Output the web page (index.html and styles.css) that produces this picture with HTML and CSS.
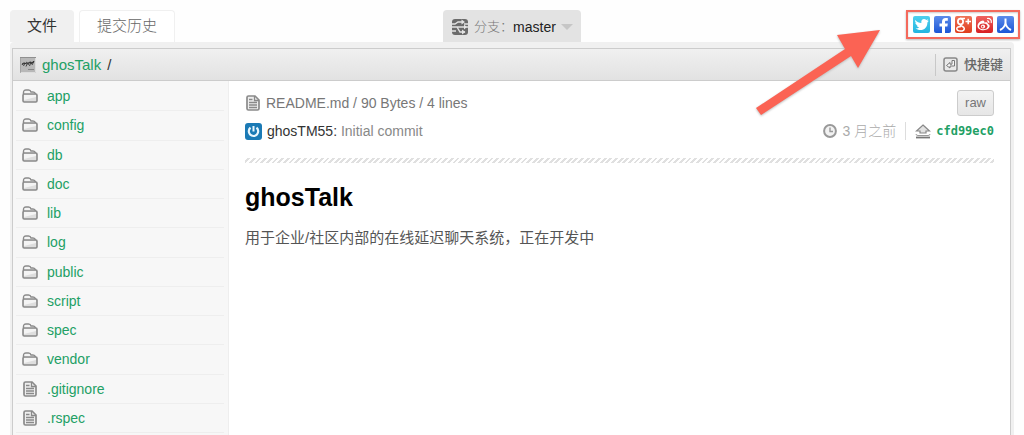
FILE: index.html
```html
<!DOCTYPE html>
<html lang="zh-CN">
<head>
<meta charset="utf-8">
<title>ghosTalk</title>
<link rel="stylesheet" href="styles.css">
</head>
<body>
<svg class="defs" aria-hidden="true">
  <defs>
    <linearGradient id="cyan" x2="0" y2="1"><stop stop-color="#4fd0ee"/><stop offset="1" stop-color="#22b5e0"/></linearGradient>
    <linearGradient id="blue" x2="0" y2="1"><stop stop-color="#5c8cea"/><stop offset="1" stop-color="#1c56d6"/></linearGradient>
    <linearGradient id="orange" x2="0" y2="1"><stop stop-color="#ee7458"/><stop offset="1" stop-color="#e03c1c"/></linearGradient>
    <linearGradient id="red" x2="0" y2="1"><stop stop-color="#ee6460"/><stop offset="1" stop-color="#d81e22"/></linearGradient>
    <symbol id="folder" viewBox="0 0 16 14">
      <path d="M1.500 5V3.500Q1.500 1 4 1h2.500q2 0 2.500 2h2q2 0 2.500 2" fill="#f4f4f4" stroke="#8a8a8a" stroke-width="1.400"/>
      <rect x="1" y="5" width="14" height="8" rx="1.200" fill="#dedede" stroke="#8a8a8a" stroke-width="1.600"/>
      <path d="M2 6h12v2L2 11z" fill="#f4f4f4"/>
    </symbol>
    <symbol id="doc" viewBox="0 0 14 16">
      <path d="M2.500 1h6.500l4 4v8.500q0 1.500-1.500 1.500h-9Q1 15 1 13.500v-11Q1 1 2.500 1z" fill="#eee" stroke="#8a8a8a" stroke-width="1.700"/>
      <path d="M8.500 1v4.500H13M3 4.500h3.500M3 7.500h8M3 10h8M3 12.500h8" fill="none" stroke="#8a8a8a" stroke-width="1.300"/>
    </symbol>
  </defs>
</svg>

<header class="top">
  <nav class="tabs">
    <a class="tab tab-active" href="#files">文件</a>
    <a class="tab" href="#history">提交历史</a>
  </nav>
  <button class="branch" type="button">
    <svg class="branch-icon" viewBox="0 0 16 16" aria-hidden="true">
      <rect width="16" height="16" rx="3" fill="#6b6b6b"/>
      <path d="M0 5h3l3-2h5M0 8h16M5 8l3 5h5M0 12h4M12 5h4" fill="none" stroke="#e3e3e3" stroke-width="1.400"/>
      <path d="M9.500 0.500l3.500 2.500-3.500 2.500zM12 5.500l3 2.500-3 2.500zM10 10.500l3.500 2.500-3.500 2.500z" fill="#e3e3e3"/>
    </svg>
    <span class="branch-label">分支：</span><span class="branch-name">master</span>
    <span class="caret"></span>
  </button>
  <nav class="share">
    <a href="#twitter" aria-label="Twitter"><svg viewBox="0 0 17 17"><rect width="17" height="17" rx="2" fill="url(#cyan)"/><path d="M2 4c2 2 4 3 6.300 3C8 4.500 9.300 3 11 3c1 0 1.700.4 2.300 1l2-.7-1 1.700 1.500-.2-1.400 1.600C14.300 11 11.500 14 7.500 14c-2 0-3.700-.6-5-1.500 1.500.1 2.800-.3 3.800-1.100-1.300-.1-2.200-.8-2.600-1.900h1.200C3.200 9 2.400 8 2.300 6.600l1.200.3C2.200 6 1.800 5 2 4z" fill="#fff"/></svg></a>
    <a href="#facebook" aria-label="Facebook"><svg viewBox="0 0 17 17"><rect width="17" height="17" rx="2" fill="url(#blue)"/><path d="M8 17v-6.500H5.500V7.500H8V6c0-2.700 1.300-4 3.600-4h2.200v2.800h-1.500c-1 0-1.300.5-1.300 1.300v1.400h2.800l-.4 3H11V17z" fill="#fff"/></svg></a>
    <a href="#google" aria-label="Google+"><svg viewBox="0 0 17 17"><rect width="17" height="17" rx="2" fill="url(#orange)"/><ellipse cx="5.500" cy="5.600" rx="2.600" ry="2.900" fill="none" stroke="#fff" stroke-width="1.800"/><path d="M5 2.600h5M5.500 8.500c-1.500 1.300 3.800 1.500 3.800 4 0 1.600-1.500 2.600-3.800 2.600S1.800 14.200 1.800 12.800 3.500 10.500 6 10.500M10.500 5.500H16M13.200 2.800v5.500" fill="none" stroke="#fff" stroke-width="1.500"/></svg></a>
    <a href="#weibo" aria-label="微博"><svg viewBox="0 0 17 17"><rect width="17" height="17" rx="2" fill="url(#red)"/><path d="M1.500 10c0-2.800 4-6 6-5.300 1 .4.900 1.200.7 1.900 2.200-.8 4-.5 3.600 1.400 1.300.4 1.900 1.200 1.900 2.100 0 2.200-2.900 4.200-6.200 4.200-3.400 0-6-1.700-6-4.300z" fill="#fff"/><ellipse cx="7.300" cy="10.300" rx="4.200" ry="2.900" fill="#df3736"/><circle cx="7" cy="10.500" r="2.100" fill="#fff"/><circle cx="6.600" cy="10.700" r=".9" fill="#df3736"/><path d="M11 2.500c3-.7 5 1.500 4.200 4.500M11 5c1.400-.3 2.100.6 1.700 2" fill="none" stroke="#fff" stroke-width="1.200"/></svg></a>
    <a href="#renren" aria-label="人人"><svg viewBox="0 0 17 17"><rect width="17" height="17" rx="2" fill="url(#blue)"/><path d="M8.500 2.500v4.500Q8 11.500 3 14M8.500 7Q9 11.500 14 14" fill="none" stroke="#fff" stroke-width="2"/></svg></a>
  </nav>
</header>

<main class="frame">
  <div class="panel">
    <div class="bar">
      <div class="crumbs">
        <svg class="avatar" viewBox="0 0 16 16" aria-hidden="true">
          <rect width="16" height="16" fill="#b8b8b8"/><path d="M0 15.500V.5h16" fill="none" stroke="#8f8f8f"/><path d="M15.500 1v14.500H1" fill="none" stroke="#ddd"/>
          <path d="M2 8q1-3 3-2L3.500 9M5 7q2-3 2.500-1L6 9.500M8 8q1-4 3-3L9.500 9M11 7l3-3-2 4M2 7l12-2" fill="none" stroke="#333" stroke-width="0.900"/><path d="M8.500 12.500h5" stroke="#555" stroke-dasharray="1 1"/>
        </svg>
        <a href="#root">ghosTalk</a><span>/</span>
      </div>
      <button class="keys" type="button">
        <svg class="keys-icon" viewBox="0 0 15 15" aria-hidden="true">
          <rect x="1" y="1" width="13" height="13" rx="2" fill="#e9e9e9" stroke="#888" stroke-width="1.500"/>
          <path d="M9 3.500h2.500v5.500H7v2L3.500 8.500 7 5.500v1.700h2z" fill="#f5f5f5" stroke="#777"/>
        </svg>
        快捷键
      </button>
    </div>
    <div class="columns">
      <ul class="files">
        <li><svg class="folder"><use href="#folder"/></svg><a href="#app">app</a></li>
        <li><svg class="folder"><use href="#folder"/></svg><a href="#config">config</a></li>
        <li><svg class="folder"><use href="#folder"/></svg><a href="#db">db</a></li>
        <li><svg class="folder"><use href="#folder"/></svg><a href="#doc-dir">doc</a></li>
        <li><svg class="folder"><use href="#folder"/></svg><a href="#lib">lib</a></li>
        <li><svg class="folder"><use href="#folder"/></svg><a href="#log">log</a></li>
        <li><svg class="folder"><use href="#folder"/></svg><a href="#public">public</a></li>
        <li><svg class="folder"><use href="#folder"/></svg><a href="#script">script</a></li>
        <li><svg class="folder"><use href="#folder"/></svg><a href="#spec">spec</a></li>
        <li><svg class="folder"><use href="#folder"/></svg><a href="#vendor">vendor</a></li>
        <li><svg class="doc"><use href="#doc"/></svg><a href="#gitignore">.gitignore</a></li>
        <li><svg class="doc"><use href="#doc"/></svg><a href="#rspec">.rspec</a></li>
      </ul>
      <article class="content">
        <div class="line">
          <div class="group"><svg class="doc"><use href="#doc"/></svg><span>README.md / 90 Bytes / 4 lines</span></div>
          <button class="raw" type="button">raw</button>
        </div>
        <div class="line">
          <div class="group">
            <svg class="user" viewBox="0 0 17 17" aria-hidden="true"><rect width="17" height="17" rx="3" fill="#1b7ab5"/><path d="M5.500 4.700A4.700 4.700 0 1 0 11.500 4.700" fill="none" stroke="#e9f6fd" stroke-width="2.200"/><path d="M8.500 3v5.500" stroke="#e9f6fd" stroke-width="2"/></svg>
            <span><span class="author">ghosTM55:</span> <span class="message">Initial commit</span></span>
          </div>
          <div class="meta">
            <span class="time">
              <svg class="clock" viewBox="0 0 14 14" aria-hidden="true"><circle cx="7" cy="7" r="5.900" fill="#f2f2f2" stroke="#999" stroke-width="2"/><path d="M7 3.500V7.500H10" fill="none" stroke="#999" stroke-width="1.400"/></svg>
              3 月之前
            </span>
            <a class="hash" href="#commit">
              <svg class="push" viewBox="0 0 16 15" aria-hidden="true"><path d="M8 1l6.500 6H11v2H5V7H1.500z" fill="#e2e2e2" stroke="#888" stroke-width="1.200"/><path d="M1 10q0 1.500 2 1.500h10q2 0 2-1.500" fill="none" stroke="#999"/><path d="M1 13.500h14" stroke="#777" stroke-width="1.800"/></svg>
              cfd99ec0
            </a>
          </div>
        </div>
        <div class="hatch"></div>
        <h1>ghosTalk</h1>
        <p>用于企业/社区内部的在线延迟聊天系统，正在开发中</p>
      </article>
    </div>
  </div>
</main>

<svg class="arrow" viewBox="0 0 128 92" aria-hidden="true"><path d="M2 80L91 21 83 7 126 2 104 40 97 28 7 87z" fill="#fb6354"/></svg>
</body>
</html>
```
FILE: styles.css
```css
* { box-sizing: border-box; }
body {
  position: relative;
  display: flex;
  flex-direction: column;
  min-height: 100vh;
  margin: 0;
  padding: 10px 10px 0;
  background: #fefefe;
  color: #333;
  font: 14px/20px "Liberation Sans", "Noto Sans CJK SC", sans-serif;
}
a { color: #22a065; text-decoration: none; }
button { border: 0; background: none; font: inherit; color: inherit; padding: 0; }
svg { display: block; flex: none; }
.defs { position: absolute; width: 0; height: 0; }

.top {
  display: grid;
  grid-template-columns: 1fr auto 1fr;
  height: 32px;
}
.tabs { display: flex; gap: 5px; }
.tab {
  padding: 5px 17px 0;
  border: 1px solid #f0f0f0;
  border-bottom: 0;
  border-radius: 4px 4px 0 0;
  background: #fff;
  color: #666;
  font-size: 15px;
  font-weight: 300;
}
.tab-active { padding: 5px 16px 0; background: #f0f0f0; color: #333; font-weight: 400; }
.branch {
  display: flex;
  align-items: center;
  padding: 2px 8px 0 9px;
  border-radius: 4px 4px 0 0;
  background: #e3e3e3;
}
.branch-icon { width: 16px; height: 16px; margin-right: 6px; }
.branch-label { color: #777; font-size: 13px; font-weight: 300; }
.branch-name { color: #222; }
.caret {
  margin-left: 5px;
  border: 6px solid transparent;
  border-top-color: #c6c6c6;
  border-bottom: 0;
}
.share {
  display: flex;
  justify-self: end;
  align-self: start;
  gap: 4px;
  margin-right: -6px;
  padding: 4px;
  padding-left: 5px;
  border: 2px solid #f4695c;
  background: #fff;
  box-shadow: 0 1px 2px #bbb, inset 0 1px 2px #ccc;
}
.share svg { width: 17px; height: 17px; }

.frame {
  display: flex;
  flex: 1;
  padding: 6px 3px 0 2px;
  border-radius: 4px 4px 0 0;
  background: #f0f0f0;
}
.panel {
  display: flex;
  flex: 1;
  flex-direction: column;
  border: 1px solid #ccc;
  border-bottom: 0;
  background: #fff;
}
.bar {
  display: flex;
  align-items: center;
  justify-content: space-between;
  height: 32px;
  padding: 0 7px;
  border-bottom: 1px solid #ccc;
  background: linear-gradient(#f0f0f0, #e2e2e2);
}
.crumbs { display: flex; align-items: center; gap: 6px; font-size: 15px; }
.avatar { width: 16px; height: 16px; }
.keys {
  display: flex;
  align-items: center;
  gap: 6px;
  height: 22px;
  padding-left: 7px;
  border-left: 1px solid #c8c8c8;
  color: #666;
  font-size: 13px;
  font-weight: 500;
}
.keys-icon { width: 15px; height: 15px; }

.columns { display: grid; flex: 1; grid-template-columns: 216px 1fr; }
.files {
  display: grid;
  grid-auto-rows: minmax(29px, 1fr);
  margin: 0;
  padding: 1px 4px 2px 3px;
  border-right: 1px solid #eee;
  background: #f7f7f7;
  list-style: none;
}
.files li {
  display: flex;
  align-items: center;
  gap: 9px;
  padding-left: 6px;
  border-bottom: 1px solid #eee;
}
.folder { width: 16px; height: 14px; }
.doc { width: 14px; height: 16px; }
.files .doc { margin: 0 1px; }

.content { padding: 8px 16px 0; }
.line { display: flex; align-items: center; justify-content: space-between; height: 28px; color: #777; }
.group { display: flex; align-items: center; gap: 5px; }
.group .doc { margin: 0 1px; }
.user { width: 17px; height: 17px; }
.author { color: #333; }
.message { color: #888; }
.raw {
  height: 26px;
  padding: 0 7px;
  border: 1px solid #ccc;
  border-radius: 3px;
  background: linear-gradient(#f3f3f3, #e6e6e6);
  color: #777;
  font-size: 13px;
}
.meta { display: flex; align-items: center; }
.time {
  display: flex;
  align-items: center;
  gap: 6px;
  padding-right: 9px;
  border-right: 1px solid #ddd;
  color: #aaa;
  font-weight: 300;
  line-height: 18px;
}
.clock { width: 14px; height: 14px; }
.hash {
  display: flex;
  align-items: center;
  gap: 5px;
  padding-left: 9px;
  font: bold 12px/18px "DejaVu Sans Mono", monospace;
}
.push { width: 16px; height: 15px; }
.hatch {
  height: 5px;
  margin-top: 13px;
  background: repeating-linear-gradient(135deg, #fff 0 2px, #e0e0e0 2px 4px);
}
h1 { margin: 19px 0 0; color: #000; font-size: 25px; line-height: 30px; }
p { margin: 16px 0 0; color: #555; font-size: 15px; line-height: 20px; }

.arrow { position: absolute; top: 28px; right: 142px; width: 128px; height: 92px; filter: drop-shadow(0 1px 1px #bbb); }
```
